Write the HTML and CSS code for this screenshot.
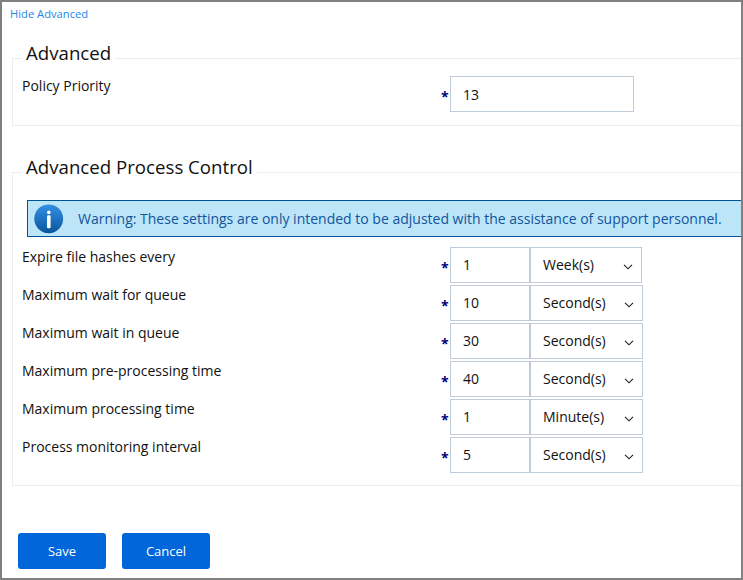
FILE: index.html
```html
<!DOCTYPE html>
<html lang="en">
<head>
<meta charset="utf-8">
<title>Advanced settings</title>
<link rel="stylesheet" href="styles.css">
</head>
<body>
<form class="page">
  <a class="toggle">Hide Advanced</a>
  <fieldset class="group group-basic">
    <legend>Advanced</legend>
    <div class="row"><label>Policy Priority</label><b class="req">*</b><div class="box wide">13</div></div>
  </fieldset>
  <fieldset class="group group-process">
    <legend>Advanced Process Control</legend>
    <div class="alert">
      <svg class="info" viewBox="0 0 30 30">
        <defs><linearGradient id="g" x1="0" y1="0" x2="0" y2="1"><stop offset="0" stop-color="#3690e4"/><stop offset="1" stop-color="#08559d"/></linearGradient></defs>
        <circle cx="14.7" cy="14.8" r="14.4" fill="url(#g)"/>
        <circle cx="14.8" cy="8.4" r="1.8" fill="#fff"/>
        <rect x="13" y="11.3" width="3.6" height="13" rx="1.4" fill="#fff"/>
      </svg>
      <span>Warning: These settings are only intended to be adjusted with the assistance of support personnel.</span>
    </div>
    <div class="row"><label>Expire file hashes every</label><b class="req">*</b><div class="box">1</div><div class="box select short">Week(s)<svg class="chev" viewBox="0 0 10 6"><path d="M1 .8 5 4.8 9 .8"/></svg></div></div>
    <div class="row"><label>Maximum wait for queue</label><b class="req">*</b><div class="box">10</div><div class="box select">Second(s)<svg class="chev" viewBox="0 0 10 6"><path d="M1 .8 5 4.8 9 .8"/></svg></div></div>
    <div class="row"><label>Maximum wait in queue</label><b class="req">*</b><div class="box">30</div><div class="box select">Second(s)<svg class="chev" viewBox="0 0 10 6"><path d="M1 .8 5 4.8 9 .8"/></svg></div></div>
    <div class="row"><label>Maximum pre-processing time</label><b class="req">*</b><div class="box">40</div><div class="box select">Second(s)<svg class="chev" viewBox="0 0 10 6"><path d="M1 .8 5 4.8 9 .8"/></svg></div></div>
    <div class="row"><label>Maximum processing time</label><b class="req">*</b><div class="box">1</div><div class="box select">Minute(s)<svg class="chev" viewBox="0 0 10 6"><path d="M1 .8 5 4.8 9 .8"/></svg></div></div>
    <div class="row"><label>Process monitoring interval</label><b class="req">*</b><div class="box">5</div><div class="box select">Second(s)<svg class="chev" viewBox="0 0 10 6"><path d="M1 .8 5 4.8 9 .8"/></svg></div></div>
  </fieldset>
  <div class="actions"><button type="button">Save</button><button type="button">Cancel</button></div>
</form>
</body>
</html>
```
FILE: styles.css
```css
* { box-sizing: border-box; }

body {
  margin: 0;
  font: 14px/20px "Open Sans", sans-serif;
  color: #111;
}

.page {
  height: 580px;
  border: 2px solid #808080;
  background: #fff;
  overflow: hidden;
}

.toggle {
  display: block;
  height: 44px;
  padding: 4px 0 0 8px;
  font-size: 11.2px;
  line-height: 16px;
  color: #1e88e5;
}

.group {
  margin: 0 0 0 10px;
  padding: 0;
  min-width: 0;
  border: 1px solid #ebeef1;
  border-right: 0;
}

.group-basic { height: 80px; }

.group-process {
  height: 326px;
  margin-top: 34px;
}

legend {
  height: 24px;
  margin-left: 9px;
  padding: 0 4px;
  font-size: 18.66px;
  line-height: 14px;
}

.row {
  display: grid;
  grid-template-columns: 428px 9px auto auto;
  justify-content: start;
  height: 36px;
  margin: 0 0 2px 0;
}

.group-basic .row { margin-top: 6px; }

label { padding-left: 9px; }

.req {
  padding-top: 11px;
  font-size: 14px;
  color: #00007c;
}

.box {
  width: 80px;
  height: 36px;
  padding: 7px 12px;
  border: 1px solid #bfcbd9;
}

.wide {
  width: 184px;
  padding-top: 8px;
}

.select {
  display: flex;
  justify-content: space-between;
  width: 113px;
  padding-right: 8px;
}

.short { width: 112px; }

.chev {
  width: 10px;
  height: 6px;
  margin-top: 9px;
  fill: none;
  stroke: #222;
  stroke-width: 1.15;
}

.alert {
  display: flex;
  align-items: center;
  height: 37px;
  margin: 16px 0 10px 14px;
  padding-left: 6px;
  border: 1px solid #00539b;
  border-right: 0;
  background: #bde5f8;
  color: #11549c;
  white-space: nowrap;
}

.info {
  width: 30px;
  height: 30px;
  margin-right: 14px;
}

.actions {
  display: flex;
  gap: 16px;
  padding: 47px 0 0 16px;
}

button {
  width: 88px;
  height: 36px;
  padding: 0;
  border: 0;
  border-radius: 3px;
  background: #0066d9;
  color: #fff;
  font: 500 13px/20px "Open Sans", sans-serif;
}
```
